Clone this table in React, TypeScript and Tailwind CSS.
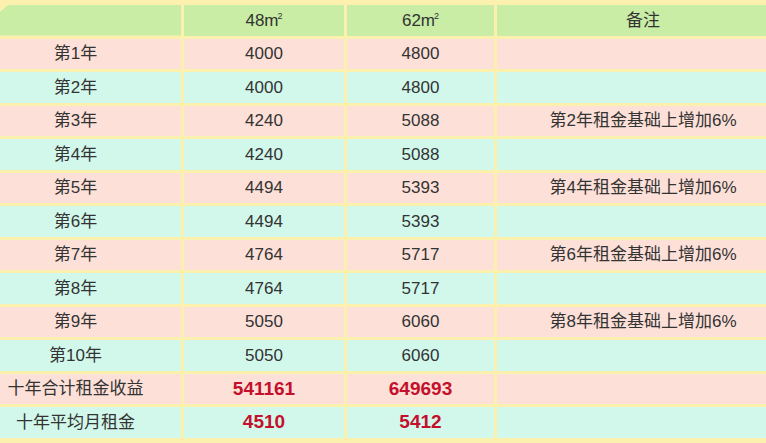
import React from "react";

type Row = { label: string; a: string; b: string; note?: string; total?: boolean };

const rows: Row[] = [
  { label: "第1年", a: "4000", b: "4800" },
  { label: "第2年", a: "4000", b: "4800" },
  { label: "第3年", a: "4240", b: "5088", note: "第2年租金基础上增加6%" },
  { label: "第4年", a: "4240", b: "5088" },
  { label: "第5年", a: "4494", b: "5393", note: "第4年租金基础上增加6%" },
  { label: "第6年", a: "4494", b: "5393" },
  { label: "第7年", a: "4764", b: "5717", note: "第6年租金基础上增加6%" },
  { label: "第8年", a: "4764", b: "5717" },
  { label: "第9年", a: "5050", b: "6060", note: "第8年租金基础上增加6%" },
  { label: "第10年", a: "5050", b: "6060" },
  { label: "十年合计租金收益", a: "541161", b: "649693", total: true },
  { label: "十年平均月租金", a: "4510", b: "5412", total: true },
];

export default function App() {
  return (
    <div
      className="w-[766px] h-[443px] overflow-hidden bg-[#fcf0ae] pt-[5px] pb-[5px] text-[17px] text-[#333]"
      style={{ fontFamily: '"Liberation Sans", "Noto Sans CJK SC", sans-serif' }}
    >
      <div className="grid h-full grid-cols-[181px_160px_147px_269px] grid-rows-[repeat(13,1fr)] gap-[3px]">
        {/* 表头 */}
        <div className="bg-[#c9eda5] [clip-path:polygon(8px_0,100%_0,100%_100%,0_100%,0_7px)]" />
        <div className="flex items-center justify-center bg-[#c9eda5]">
          48m<sup className="text-[9px] -ml-[1px]">2</sup>
        </div>
        <div className="flex items-center justify-center bg-[#c9eda5]">
          62m<sup className="text-[9px] -ml-[1px]">2</sup>
        </div>
        <div className="flex items-center justify-center bg-[#c9eda5] pl-[23px]">备注</div>

        {rows.map((r, i) => {
          const bg = i % 2 === 0 ? "bg-[#fde0d8]" : "bg-[#d2f8ec]";
          const num = r.total ? "font-bold text-[19px] text-[#c3102c]" : "";
          return (
            <React.Fragment key={r.label}>
              <div className={`flex items-center justify-center pr-[30px] ${bg}`}>{r.label}</div>
              <div className={`flex items-center justify-center ${bg} ${num}`}>{r.a}</div>
              <div className={`flex items-center justify-center ${bg} ${num}`}>{r.b}</div>
              <div className={`flex items-center justify-center pl-[23px] ${bg}`}>{r.note}</div>
            </React.Fragment>
          );
        })}
      </div>
    </div>
  );
}
